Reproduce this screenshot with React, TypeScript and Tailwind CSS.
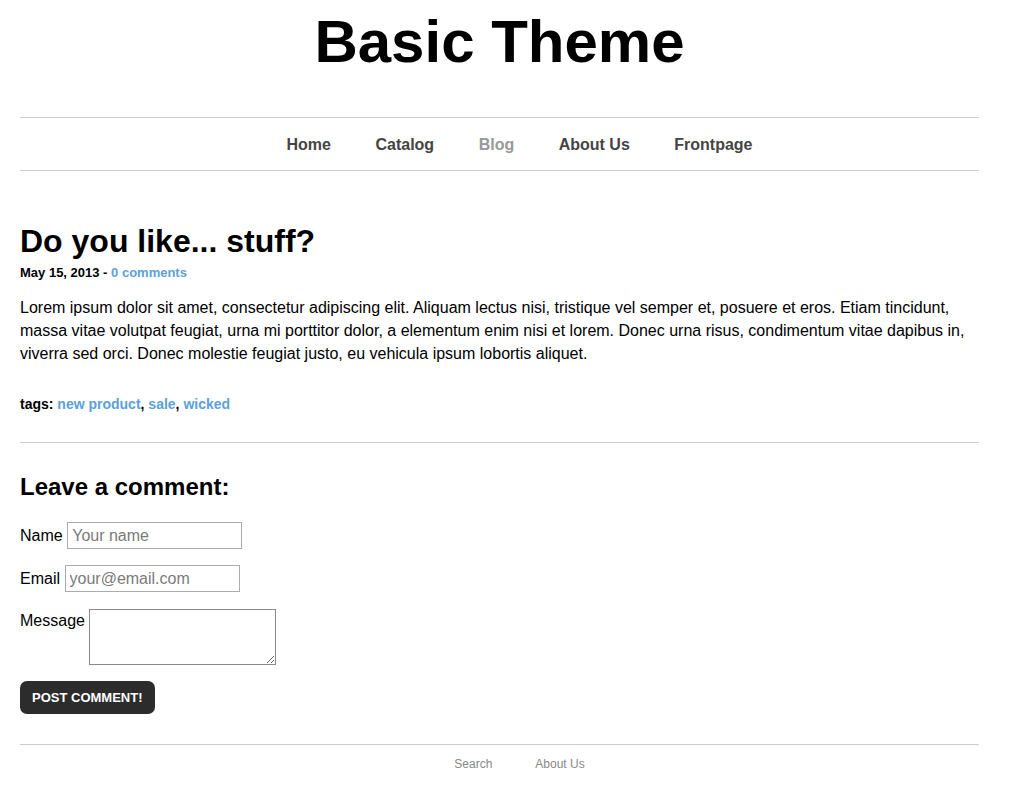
import React from 'react'

const NAV = ['Home', 'Catalog', 'Blog', 'About Us', 'Frontpage']

export default function App() {
  return (
    <div className="min-h-screen bg-white text-black pl-[20px] pr-[30px] font-['Liberation_Sans',Arial,sans-serif]">
      <h1 className="mt-[12px] text-center text-[60px] leading-[60px] font-bold">Basic Theme</h1>

      <nav className="mt-[45px] border-t border-b border-[#cccccc] pt-[17px] pb-[15px]">
        <ul className="flex justify-center pl-[40px] gap-[44.5px] text-[16px] leading-[20px] font-bold">
          {NAV.map(item => (
            <li key={item} className={item === 'Blog' ? 'text-[#999999]' : 'text-[#444444]'}>
              {item}
            </li>
          ))}
        </ul>
      </nav>

      <article className="mt-[50px]">
        <h2 className="text-[32px] leading-[40px] font-bold">Do you like... stuff?</h2>
        <p className="mt-[4px] text-[13px] leading-[16px] font-bold">
          May 15, 2013 - <a className="text-[#5ca1d9]">0 comments</a>
        </p>
        <p className="mt-[15px] text-[16px] leading-[23px]">
          Lorem ipsum dolor sit amet, consectetur adipiscing elit. Aliquam lectus nisi, tristique vel semper et, posuere et eros. Etiam tincidunt, massa vitae volutpat feugiat, urna mi porttitor dolor, a elementum enim nisi et lorem. Donec urna risus, condimentum vitae dapibus in, viverra sed orci. Donec molestie feugiat justo, eu vehicula ipsum lobortis aliquet.
        </p>
        <p className="mt-[30px] text-[14px] leading-[18px] font-bold">
          tags: <a className="text-[#5ca1d9]">new product</a>, <a className="text-[#5ca1d9]">sale</a>, <a className="text-[#5ca1d9]">wicked</a>
        </p>
      </article>

      <hr className="mt-[29px] border-0 border-t border-[#cccccc]" />

      <section>
        <h3 className="mt-[30px] text-[24px] leading-[28px] font-bold">Leave a comment:</h3>
        <form className="text-[16px]">
          <div className="mt-[21px] flex items-center gap-[4.5px]">
            <label className="leading-[20px]">Name</label>
            <input
              placeholder="Your name"
              className="w-[175px] h-[27px] border border-[#ababab] px-[4px] text-[16px] placeholder:text-[#7a7a7a] outline-none"
            />
          </div>
          <div className="mt-[16px] flex items-center gap-[4.5px]">
            <label className="leading-[20px]">Email</label>
            <input
              placeholder="your@email.com"
              className="w-[175px] h-[27px] border border-[#ababab] px-[4px] text-[16px] placeholder:text-[#7a7a7a] outline-none"
            />
          </div>
          <div className="mt-[17px] flex items-start gap-[4.5px]">
            <label className="leading-[24px]">Message</label>
            <textarea className="w-[187px] h-[56px] border border-[#8a8a8a] outline-none" />
          </div>
          <button
            type="button"
            className="mt-[16px] h-[33px] px-[12px] rounded-[7px] bg-[#2c2c2c] text-white text-[13px] font-bold uppercase"
          >
            Post comment!
          </button>
        </form>
      </section>

      <footer className="mt-[30px] border-t border-[#cccccc]">
        <ul className="mt-[11px] flex justify-center pl-[40px] gap-[43px] text-[12px] leading-[16px] text-[#888888]">
          <li>Search</li>
          <li>About Us</li>
        </ul>
      </footer>
    </div>
  )
}
